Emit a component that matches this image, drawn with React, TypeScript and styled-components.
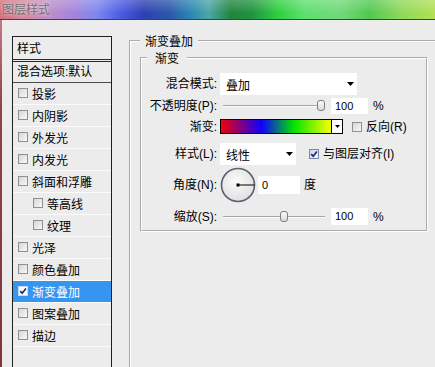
import React from "react";
import styled, { createGlobalStyle } from "styled-components";

const GlobalStyle = createGlobalStyle`
  html, body { margin: 0; padding: 0; background: #ececec; }
  body {
    font-family: "Liberation Sans", "Noto Sans CJK SC", sans-serif;
    font-size: 12px;
    color: #000;
  }
  * { box-sizing: border-box; }
`;

const Window = styled.div`
  width: 435px;
  height: 367px;
  overflow: hidden;
  display: flex;
  flex-direction: column;
  background: #ececec;
`;

const TitleBar = styled.div`
  height: 20px;
  flex: none;
  display: flex;
  align-items: center;
  padding: 0 0 1px 2px;
  border-bottom: 1px solid #3c3f58;
  background:
    linear-gradient(180deg, rgba(255, 255, 255, 0.22) 0%, rgba(255, 255, 255, 0) 70%),
    linear-gradient(
      90deg,
      #d4707c 0%,
      #d28aa2 6%,
      #bf8fcb 11%,
      #a484da 17%,
      #8088ee 22%,
      #4a5ae2 28%,
      #2f3fb2 33%,
      #2a58aa 39%,
      #2b88b2 44%,
      #4aa6a6 48%,
      #23843f 53%,
      #1f9440 58%,
      #2fd040 64%,
      #5ee070 70%,
      #72d97a 78%,
      #52c852 85%,
      #8ed85a 92%,
      #b2e056 100%
    );
`;

const TitleText = styled.span`
  font: 12px/14px "Noto Sans CJK SC", sans-serif;
  color: #707070;
  text-shadow: 0 0 3px rgba(255, 255, 255, 0.85);
`;

const Body = styled.div`
  flex: 1;
  display: flex;
  min-height: 0;
`;

const Frame = styled.div`
  width: 2px;
  flex: none;
  background: linear-gradient(180deg, #c77888 0%, #93404a 25%, #7e363b 100%);
`;

const Content = styled.div`
  flex: 1;
  min-width: 0;
  display: flex;
  align-items: flex-start;
  gap: 17px;
  padding: 16px 0 0 10px;
`;

/* ---------- left list ---------- */

const StyleList = styled.div`
  width: 100px;
  height: 360px;
  flex: none;
  border: 1px solid #1f1f1f;
  border-bottom: none;
  display: flex;
  flex-direction: column;
`;

const ListHeader = styled.div`
  height: 25px;
  padding: 0 0 0 4px;
  line-height: 22px;
  border-bottom: 3px double #2a2a2a;
  font-family: "Noto Sans CJK SC", sans-serif;
`;

const BlendRow = styled.div`
  height: 21px;
  padding-left: 4px;
  line-height: 20px;
  border-bottom: 1px solid #4a4a4a;
  font-family: "Liberation Sans", "Noto Sans CJK SC", sans-serif;
  white-space: nowrap;
`;

const ListRow = styled.div<{ $indent?: boolean; $selected?: boolean }>`
  height: 22px;
  display: flex;
  align-items: center;
  padding-left: ${(p) => (p.$indent ? 20 : 5)}px;
  padding-bottom: 1px;
  border-bottom: 1px solid #fbfbfb;
  background: ${(p) => (p.$selected ? "#3795f2" : "transparent")};
  color: ${(p) => (p.$selected ? "#fff" : "#000")};
  font-family: "Noto Sans CJK SC", sans-serif;
  white-space: nowrap;
`;

const Box = styled.span<{ $size: number; $checked?: boolean }>`
  width: ${(p) => p.$size}px;
  height: ${(p) => p.$size}px;
  flex: none;
  display: inline-flex;
  align-items: center;
  justify-content: center;
  border: 1px solid ${(p) => (p.$checked ? "#7b8aa6" : "#909090")};
  background: ${(p) =>
    p.$checked
      ? "linear-gradient(135deg, #c9d4e6, #f4f7fc)"
      : "linear-gradient(135deg, #d6d6d6, #f8f8f8)"};
  margin-right: 4px;
`;

const CheckBox: React.FC<{ size?: number; checked?: boolean; white?: boolean }> = ({
  size = 10,
  checked,
  white,
}) => (
  <Box $size={size} $checked={checked && !white} style={white ? { background: "#fff", borderColor: "#c8d8f0" } : undefined}>
    {checked && (
      <svg width={size - 2} height={size - 2} viewBox="0 0 8 8">
        <path d="M1.2 4.2 L3.2 6.2 L6.9 1.4" fill="none" stroke="#1b2c78" strokeWidth="1.7" />
      </svg>
    )}
  </Box>
);

/* ---------- right panel ---------- */

const OuterGroup = styled.fieldset`
  flex: 1;
  min-width: 0;
  height: 360px;
  margin: -1px -4px 0 0;
  padding: 5px 9px 0 9px;
  border: 2px groove #ffffff;
`;

const Legend = styled.legend<{ $ml: number; $pad: number }>`
  margin-left: ${(p) => p.$ml}px;
  padding: 0 ${(p) => p.$pad}px;
  font-family: "Noto Sans CJK SC", sans-serif;
  font-size: 12px;
  line-height: 12px;
  height: 12px;
`;

const InnerGroup = styled.fieldset`
  margin: 0;
  padding: 0 0 5px 0;
  border: 2px groove #ffffff;
  min-width: 0;
`;

const Rows = styled.div`
  display: flex;
  flex-direction: column;
  padding-top: 9px;
`;

const Row = styled.div<{ $h: number; $mt: number }>`
  height: ${(p) => p.$h}px;
  margin-top: ${(p) => p.$mt}px;
  display: flex;
  align-items: center;
  white-space: nowrap;
`;

const Label = styled.span`
  width: 75px;
  margin-right: 3px;
  text-align: right;
  line-height: 14px;
  flex: none;
`;

const Select = styled.div<{ $w: number }>`
  width: ${(p) => p.$w}px;
  height: 22px;
  background: #fff;
  display: flex;
  align-items: center;
  justify-content: space-between;
  padding: 0 3px 0 6px;
  font-family: "Noto Sans CJK SC", sans-serif;
  flex: none;
`;

const Arrow: React.FC<{ w?: number }> = ({ w = 7 }) => (
  <svg width={w} height={Math.ceil(w / 2)} viewBox={`0 0 ${w} ${Math.ceil(w / 2)}`}>
    <path d={`M0 0 H${w} L${w / 2} ${Math.ceil(w / 2)} Z`} fill="#000" />
  </svg>
);

const Slider = styled.div`
  position: relative;
  width: 102px;
  height: 12px;
  margin-left: 3px;
  flex: none;
`;

const Track = styled.div`
  margin-top: 5px;
  height: 2px;
  border-top: 1px solid #a6a6a6;
  border-bottom: 1px solid #fbfbfb;
`;

const Thumb = styled.div`
  position: absolute;
  top: 0;
  width: 8px;
  height: 11px;
  border: 1px solid #7d7d7d;
  border-radius: 3px;
  background: linear-gradient(180deg, #fbfbfb, #d9d9d9);
`;

const NumInput = styled.div<{ $w: number; $h: number; $ml: number }>`
  width: ${(p) => p.$w}px;
  height: ${(p) => p.$h}px;
  margin-left: ${(p) => p.$ml}px;
  background: #fff;
  padding-left: 4px;
  font-family: "Liberation Sans", sans-serif;
  font-size: 11px;
  line-height: ${(p) => p.$h}px;
  flex: none;
`;

const Unit = styled.span<{ $ml: number }>`
  margin-left: ${(p) => p.$ml}px;
  line-height: 14px;
`;

const GradientBar = styled.div`
  width: 112px;
  height: 15px;
  border: 1px solid #000;
  background: linear-gradient(90deg, #f00008 0%, #1000ff 37%, #00e400 66%, #fbff00 100%);
  flex: none;
`;

const GradientDrop = styled.div`
  width: 11px;
  height: 15px;
  border: 1px solid #000;
  border-left: none;
  background: #fff;
  display: flex;
  align-items: center;
  justify-content: center;
  flex: none;
`;

const CheckLabel = styled.label<{ $ml: number }>`
  display: flex;
  align-items: center;
  margin-left: ${(p) => p.$ml}px;
  line-height: 14px;
`;

const Dial = () => (
  <svg width="36" height="36" viewBox="0 0 36 36" style={{ flex: "none" }}>
    <defs>
      <radialGradient id="dialFill" cx="45%" cy="40%" r="65%">
        <stop offset="0%" stopColor="#fbfbfb" />
        <stop offset="100%" stopColor="#dedede" />
      </radialGradient>
    </defs>
    <circle cx="18" cy="18" r="16.5" fill="url(#dialFill)" stroke="#5d5f6c" strokeWidth="1.6" />
    <line x1="18" y1="18" x2="34.5" y2="18" stroke="#000" strokeWidth="1" />
    <rect x="16.5" y="16.5" width="3" height="3" fill="#000" />
  </svg>
);

const items: { name: string; indent?: boolean; checked?: boolean; selected?: boolean }[] = [
  { name: "投影" },
  { name: "内阴影" },
  { name: "外发光" },
  { name: "内发光" },
  { name: "斜面和浮雕" },
  { name: "等高线", indent: true },
  { name: "纹理", indent: true },
  { name: "光泽" },
  { name: "颜色叠加" },
  { name: "渐变叠加", checked: true, selected: true },
  { name: "图案叠加" },
  { name: "描边" },
];

export default function App() {
  return (
    <Window>
      <GlobalStyle />
      <TitleBar>
        <TitleText>图层样式</TitleText>
      </TitleBar>
      <Body>
        <Frame />
        <Content>
          <StyleList>
            <ListHeader>样式</ListHeader>
            <BlendRow>混合选项:默认</BlendRow>
            {items.map((it) => (
              <ListRow key={it.name} $indent={it.indent} $selected={it.selected}>
                <CheckBox checked={it.checked} white={it.selected} />
                <span>{it.name}</span>
              </ListRow>
            ))}
          </StyleList>

          <OuterGroup>
            <Legend $ml={0} $pad={5}>渐变叠加</Legend>
            <InnerGroup>
              <Legend $ml={5} $pad={8}>渐变</Legend>
              <Rows>
                <Row $h={22} $mt={0}>
                  <Label>混合模式:</Label>
                  <Select $w={137}>
                    <span>叠加</span>
                    <Arrow />
                  </Select>
                </Row>
                <Row $h={16} $mt={3}>
                  <Label>不透明度(P):</Label>
                  <Slider>
                    <Track />
                    <Thumb style={{ left: `${(100 / 100) * 94}px` }} />
                  </Slider>
                  <NumInput $w={37} $h={16} $ml={6}>100</NumInput>
                  <Unit $ml={5}>%</Unit>
                </Row>
                <Row $h={15} $mt={5}>
                  <Label>渐变:</Label>
                  <GradientBar />
                  <GradientDrop>
                    <Arrow w={5} />
                  </GradientDrop>
                  <CheckLabel $ml={9}>
                    <CheckBox size={10} />
                    <span>反向(R)</span>
                  </CheckLabel>
                </Row>
                <Row $h={22} $mt={9}>
                  <Label>样式(L):</Label>
                  <Select $w={76}>
                    <span>线性</span>
                    <Arrow />
                  </Select>
                  <CheckLabel $ml={13}>
                    <CheckBox size={10} checked />
                    <span>与图层对齐(I)</span>
                  </CheckLabel>
                </Row>
                <Row $h={35} $mt={2}>
                  <Label>角度(N):</Label>
                  <Dial />
                  <NumInput $w={42} $h={18} $ml={2}>0</NumInput>
                  <Unit $ml={4}>度</Unit>
                </Row>
                <Row $h={17} $mt={6}>
                  <Label>缩放(S):</Label>
                  <Slider>
                    <Track />
                    <Thumb style={{ left: `${0.61 * 94}px` }} />
                  </Slider>
                  <NumInput $w={37} $h={17} $ml={6}>100</NumInput>
                  <Unit $ml={5}>%</Unit>
                </Row>
              </Rows>
            </InnerGroup>
          </OuterGroup>
        </Content>
      </Body>
    </Window>
  );
}
